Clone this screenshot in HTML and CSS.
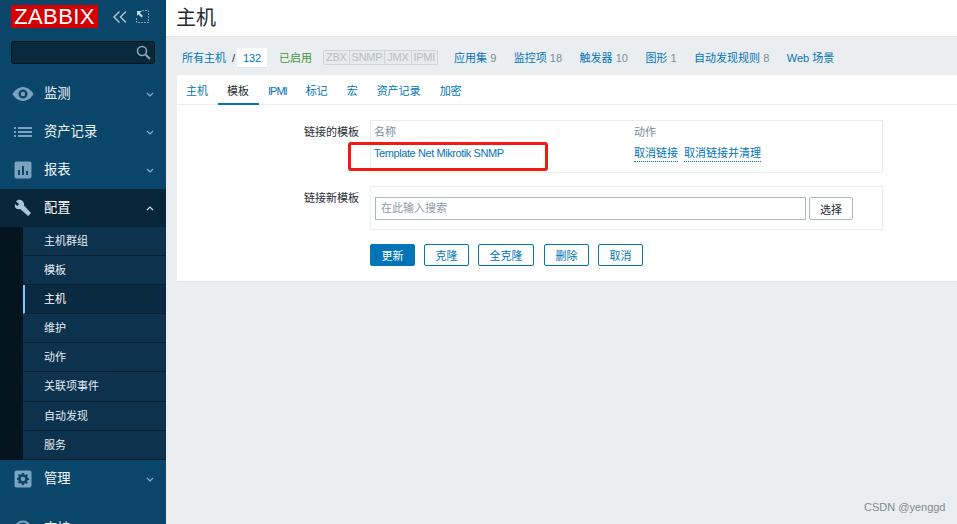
FILE: index.html
```html
<!DOCTYPE html>
<html lang="zh">
<head>
<meta charset="utf-8">
<title>主机</title>
<link rel="stylesheet" href="styles.css">
</head>
<body>
<div class="page">
  <aside class="sidebar">
    <div class="brand">
      <div class="logo">ZABBIX</div>
      <svg class="ctl" width="16" height="14" viewBox="0 0 16 14"><path d="M7.500 1.500 2 7l5.500 5.500M14 1.500 8.500 7l5.500 5.500" fill="none" stroke="#a9c0cf" stroke-width="1.500"/></svg>
      <svg class="ctl2" width="13" height="13" viewBox="0 0 13 13"><path d="M6 .5h6.500v12H.5V7" fill="none" stroke="#7f9fb4" stroke-width="1" stroke-dasharray="2 1"/><path d="M1 1h5L4 3l3 3-1.500 1.500-3-3L1 6z" fill="#c5d5df"/></svg>
    </div>
    <div class="search">
      <svg width="15" height="15" viewBox="0 0 15 15"><circle cx="6" cy="6" r="4.500" fill="none" stroke="#8aa6b8" stroke-width="1.600"/><path d="m9.500 9.500 4.500 4.500" stroke="#8aa6b8" stroke-width="2"/></svg>
    </div>
    <nav>
      <div class="item">
        <svg class="ico eye" width="22" height="16" viewBox="0 0 22 16"><path fill-rule="evenodd" d="M11 1c5 0 9 4 10.500 7C20 11 16 15 11 15S2 11 .5 8C2 5 6 1 11 1zm0 2.500a4.500 4.500 0 1 0 0 9 4.500 4.500 0 0 0 0-9zm0 2.300a2.200 2.200 0 1 1 0 4.400 2.200 2.200 0 0 1 0-4.400z" fill="#7ba3bf"/></svg>
        <span class="label">监测</span>
        <svg class="chev" width="8" height="5" viewBox="0 0 8 5"><path d="m1 1 3 3 3-3" fill="none" stroke="#8fb0c5" stroke-width="1.200"/></svg>
      </div>
      <div class="item">
        <svg class="ico" width="18" height="12" viewBox="0 0 18 12"><path d="M0 1h2v2H0zM4 1h14v2H4zM0 5h2v2H0zM4 5h14v2H4zM0 9h2v2H0zM4 9h14v2H4z" fill="#7ba3bf"/></svg>
        <span class="label">资产记录</span>
        <svg class="chev" width="8" height="5" viewBox="0 0 8 5"><path d="m1 1 3 3 3-3" fill="none" stroke="#8fb0c5" stroke-width="1.200"/></svg>
      </div>
      <div class="item">
        <svg class="ico" width="18" height="18" viewBox="0 0 18 18"><rect width="17" height="17" x=".5" y=".5" rx="2" fill="#7ba3bf"/><path d="M4 9h2v5H4zM8 5h2v9H8zM12 10h2v4h-2z" fill="#0a466a"/></svg>
        <span class="label">报表</span>
        <svg class="chev" width="8" height="5" viewBox="0 0 8 5"><path d="m1 1 3 3 3-3" fill="none" stroke="#8fb0c5" stroke-width="1.200"/></svg>
      </div>
      <div class="item open">
        <svg class="ico" width="18" height="18" viewBox="0 0 18 18"><path d="M7 1c-2-.6-4 0-5 1.500l3 2.500-1.500 2L1 5C.3 7 1 9 3 10c1.200.5 2.500.4 3.300 0l7.700 7 3-3-7-7.500C10.500 4.500 9.500 2 7 1z" fill="#a9c6d9"/></svg>
        <span class="label">配置</span>
        <svg class="chev" width="8" height="5" viewBox="0 0 8 5"><path d="m1 4 3-3 3 3" fill="none" stroke="#d5e2ea" stroke-width="1.200"/></svg>
      </div>
      <ul class="sub">
        <li>主机群组</li>
        <li>模板</li>
        <li class="current">主机</li>
        <li>维护</li>
        <li>动作</li>
        <li>关联项事件</li>
        <li>自动发现</li>
        <li>服务</li>
      </ul>
      <div class="item">
        <svg class="ico" width="18" height="18" viewBox="0 0 18 18"><rect width="17" height="17" x=".5" y=".5" rx="2" fill="#7ba3bf"/><path fill-rule="evenodd" d="M8 3h2l.3 1.500 1.200.5 1.300-.9 1.200 1.300-.8 1.200.5 1.300L15 8.200v1.800l-1.500.3-.5 1.200.8 1.300-1.300 1.200-1.200-.8-1.200.5L10 15H8l-.3-1.500-1.200-.5-1.300.8L4 12.500l.8-1.200-.5-1.200L3 9.800V8l1.300-.3.500-1.200L4 5.200l1.200-1.300 1.300.9 1.200-.5zm1 3.800a2.200 2.200 0 1 0 0 4.400 2.200 2.200 0 0 0 0-4.400z" fill="#0a466a"/></svg>
        <span class="label">管理</span>
        <svg class="chev" width="8" height="5" viewBox="0 0 8 5"><path d="m1 1 3 3 3-3" fill="none" stroke="#8fb0c5" stroke-width="1.200"/></svg>
      </div>
      <div class="item support">
        <svg class="ico" width="18" height="18" viewBox="0 0 18 18"><circle cx="9" cy="9" r="7.500" fill="none" stroke="#7ba3bf" stroke-width="2"/></svg>
        <span class="label">支持</span>
      </div>
    </nav>
  </aside>

  <main class="main">
    <header class="head"><h1>主机</h1></header>
    <div class="filters">
      <a class="lnk first">所有主机</a>
      <span class="slash">/</span>
      <a class="count">132</a>
      <span class="enabled">已启用</span>
      <span class="avail"><b>ZBX</b><b>SNMP</b><b>JMX</b><b>IPMI</b></span>
      <span class="f"><a class="lnk">应用集</a> <i>9</i></span>
      <span class="f"><a class="lnk">监控项</a> <i>18</i></span>
      <span class="f"><a class="lnk">触发器</a> <i>10</i></span>
      <span class="f"><a class="lnk">图形</a> <i>1</i></span>
      <span class="f"><a class="lnk">自动发现规则</a> <i>8</i></span>
      <span class="f"><a class="lnk">Web 场景</a></span>
    </div>
    <section class="panel">
      <div class="tabs">
        <a>主机</a><a class="active">模板</a><a class="ipmi">IPMI</a><a>标记</a><a>宏</a><a>资产记录</a><a>加密</a>
      </div>
      <div class="form">
        <div class="row">
          <div class="cap">链接的模板</div>
          <div class="box linked">
            <div class="cols head-cols"><span>名称</span><span>动作</span></div>
            <div class="cols"><a class="lnk tpl">Template Net Mikrotik SNMP</a><span class="acts"><a class="dot">取消链接</a><a class="dot">取消链接并清理</a></span></div>
          </div>
        </div>
        <div class="row">
          <div class="cap">链接新模板</div>
          <div class="box newbox">
            <div class="input">在此输入搜索</div>
            <button class="sel">选择</button>
          </div>
        </div>
        <div class="btns">
          <button class="btn primary">更新</button>
          <button class="btn">克隆</button>
          <button class="btn wide">全克隆</button>
          <button class="btn del">删除</button>
          <button class="btn">取消</button>
        </div>
      </div>
    </section>
  </main>
</div>
<div class="mark"></div>
<div class="wm">CSDN @yenggd</div>
</body>
</html>
```
FILE: styles.css
```css
* { box-sizing: border-box; }
html, body { margin: 0; height: 100%; overflow: hidden; }
body { font: 12px/14px "Liberation Sans", "Noto Sans CJK SC", sans-serif; color: #1f2c33; background: #ebeef0; }
a { color: #0275b8; text-decoration: none; }
.page { display: flex; height: 524px; overflow: hidden; }

.sidebar { width: 166px; flex: none; background: #0a466a; color: #f2f6f8; overflow: hidden; }
.brand { display: flex; align-items: center; height: 41px; padding: 5px 0 13px 11px; }
.logo { width: 87px; height: 23px; background: #d40000; color: #fff; font: 22px/23px "Liberation Sans", sans-serif; letter-spacing: .4px; text-align: center; overflow: hidden; }
.ctl { margin-left: 14px; }
.ctl2 { margin-left: 8px; }
.search { margin: 0 11px; height: 23px; width: 144px; background: #09283b; border: 1px solid #04141e; border-radius: 3px; display: flex; align-items: center; justify-content: flex-end; padding-right: 3px; }
.item { display: flex; align-items: center; height: 38px; padding-left: 14px; position: relative; }
nav { padding-top: 11px; }
.ico { position: absolute; left: 14px; top: 50%; transform: translateY(-50%); }
.ico.eye { left: 12px; }
.item .label { margin-left: 30px; font-size: 13.3px; }
.chev { position: absolute; left: 146px; top: 17px; }
.open { background: #08263a; color: #fff; }
.sub { list-style: none; margin: 0; padding: 0 0 0 23px; background: #04141e; }
.sub li { height: 29.1px; background: #0d324d; border-bottom: 1px solid #08202f; padding: 7px 0 0 21px; color: #e6edf1; font-size: 11px; }
.sub li.current { background: #092a40; border-left: 2px solid #7fc8f5; padding-left: 19px; color: #fff; }
.support { margin-top: 12px; }

.main { flex: 1; min-width: 0; display: flex; flex-direction: column; }
.head { height: 37px; background: #fff; border-bottom: 1px solid #dfe4e7; padding-left: 10px; }
h1 { margin: 0; font: 400 20px/34px "Noto Sans CJK SC", sans-serif; color: #1f2c33; }
.filters { height: 38px; display: flex; align-items: center; padding: 3px 0 0 16px; color: #768d99; font-size: 11px; white-space: nowrap; }
.slash { margin: 0 2px 0 6px; color: #1f2c33; }
.count { display: block; background: #fff; width: 30px; height: 20px; line-height: 21px; text-align: center; border-bottom: 1px solid #dfe4e7; }
.enabled { color: #3c9a37; margin-left: 12px; }
.avail { display: flex; margin-left: 11px; margin-right: 16px; width: 115px; height: 15px; border: 1px solid #ccd5d9; border-radius: 2px; color: #b4bdc2; font-size: 11px; line-height: 13px; letter-spacing: -.25px; }
.avail b { font-weight: 400; padding: 0 1px; flex: auto; text-align: center; border-left: 1px solid #ccd5d9; background: #e8ebed; }
.avail b:first-child { border-left: 0; }
.f { margin-right: 17.500px; }
.f i { font-style: normal; }
.panel { margin-left: 11px; height: 207px; background: #fff; border-bottom: 1px solid #dfe4e7; }
.tabs { display: flex; height: 30px; border-bottom: 1px solid #ebeef0; font-size: 11px; }
.tabs a { padding: 9px 10px 0 9px; height: 30px; }
.tabs a.active { color: #1f2c33; border-bottom: 2px solid #0275b8; }
.tabs a.ipmi { letter-spacing: -1px; }
.form { padding: 15px 0 0 193px; }
.row { display: flex; margin-bottom: 13px; }
.cap { width: 191px; margin-left: -191px; padding: 5px 11px 0 0; text-align: right; font-size: 11px; flex: none; }
.box { width: 513px; border: 1px solid #ebeef0; font-size: 11px; }
.linked { height: 53px; padding: 4px 3px; }
.cols { display: grid; grid-template-columns: 260px 1fr; height: 21px; line-height: 15px; }
.head-cols { color: #768d99; }
.tpl { letter-spacing: -.42px; }
.acts { display: flex; gap: 6px; }
.dot { border-bottom: 1px dotted #0275b8; height: 16px; }
.newbox { height: 44px; padding: 10px 4px; display: flex; }
.input { width: 431px; height: 23px; border: 1px solid #acbbc3; color: #8e9ca3; line-height: 21px; padding-left: 5px; font-size: 11px; }
.sel { margin-left: 3px; width: 44px; height: 23px; background: #fff; border: 1px solid #acbbc3; border-radius: 2px; font: 11px "Liberation Sans", "Noto Sans CJK SC", sans-serif; color: #1f2c33; padding: 0; }
.btns { display: flex; gap: 9px; padding-top: 1px; }
.btn { height: 22px; background: #fff; border: 1px solid #0275b8; border-radius: 2px; color: #0275b8; font: 11px "Liberation Sans", "Noto Sans CJK SC", sans-serif; padding: 0; width: 45px; }
.btn.primary { background: #0275b8; color: #fff; }
.btn.wide { width: 56px; }
.btn.del { margin-left: 1px; }

.mark { position: absolute; left: 348px; top: 142px; width: 200px; height: 29px; border: 3px solid #f01a10; border-radius: 3px; }
.wm { position: absolute; left: 864px; top: 500px; color: #7d8a91; font-size: 11px; }
```
